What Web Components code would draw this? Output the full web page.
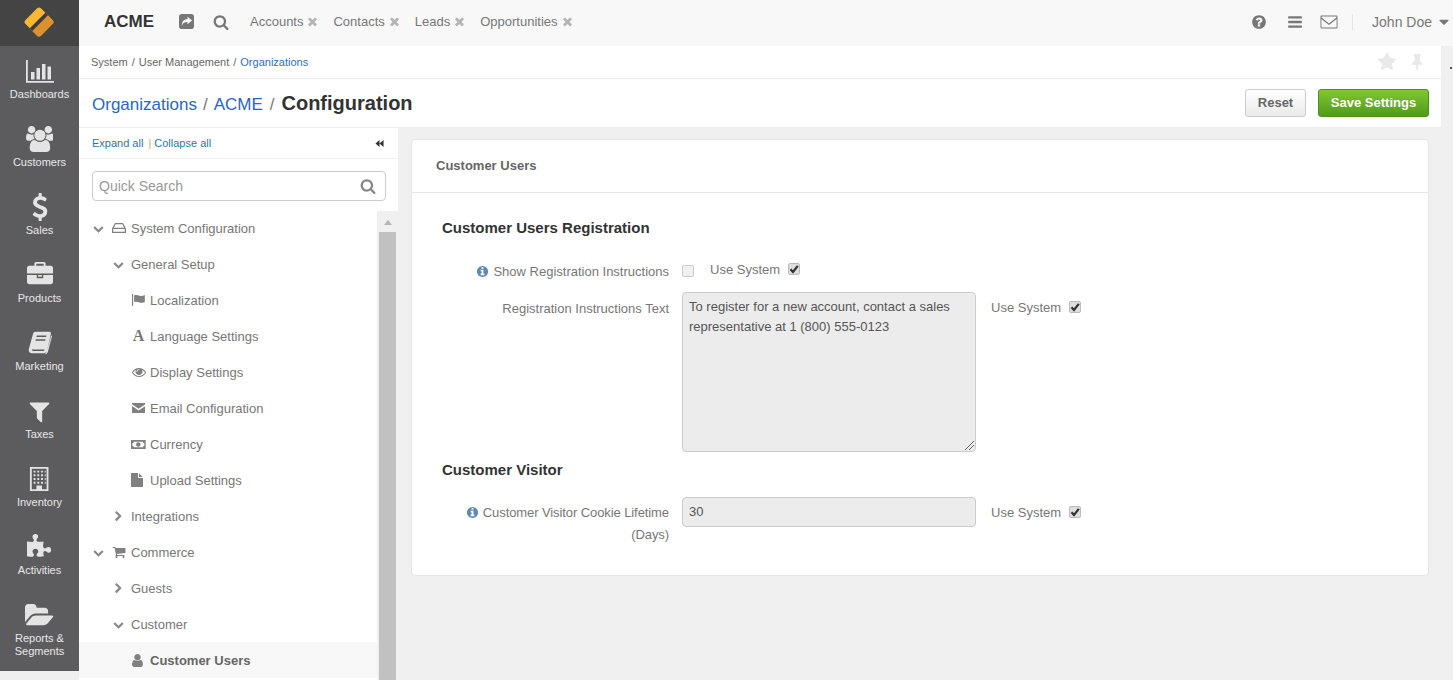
<!DOCTYPE html>
<html>
<head>
<meta charset="utf-8">
<title>Configuration</title>
<style>
html, body { margin: 0; height: 100%; overflow: hidden; background: #f0f0f0; }
body { font-family: "Liberation Sans", Arial, sans-serif; font-size: 13px; color: #777; }
</style>
</head>
<body>

<template id="app-shell-tpl">
    <style>
        :host { display: grid; grid-template-columns: 79px 1fr; width: 1453px; height: 680px; overflow: hidden; }
        .side { display: flex; flex-direction: column; height: 671px; background: #5c5c5e; }
        .main { display: flex; flex-direction: column; min-width: 0; height: 680px; }
    </style>
    <div class="side"><slot name="rail"></slot></div>
    <div class="main"><slot></slot></div>
</template>

<template id="nav-logo-tpl">
    <style>
        :host { display: flex; align-items: center; justify-content: center; height: 46px; background: #444; flex: none; box-sizing: border-box; padding: 0 2px 2px 0; }
        svg { display: block; width: 32px; height: 32px; }
    </style>
    <svg viewBox="0 0 32 32">
        <g transform="rotate(45 16 16)">
            <rect x="5" y="5" width="22" height="22" rx="3" fill="#fdb833"/>
            <path d="M16 5h8q3 0 3 3v16q0 3-3 3h-8z" fill="#dd9030"/>
            <rect x="14" y="5" width="3.6" height="22" fill="#3c3c3c"/>
        </g>
    </svg>
</template>

<template id="nav-item-tpl">
    <style>
        :host { display: flex; flex-direction: column; align-items: center; height: 68px; flex: none; box-sizing: border-box; padding-top: 11px; color: #e8e8e8; font-size: 11px; line-height: 13px; text-align: center; }
        .ico { height: 28px; display: flex; align-items: center; justify-content: center; margin-bottom: 3px; }
    </style>
    <div class="ico"><slot name="icon"></slot></div>
    <div><slot></slot></div>
</template>

<template id="top-bar-tpl">
    <style>
        :host { display: flex; align-items: center; height: 46px; flex: none; box-sizing: border-box; background: #f8f8f8; padding: 0 0 3px 25px; }
        .brand { font-size: 17px; font-weight: bold; color: #333; width: 75px; }
        .tools { display: flex; align-items: center; gap: 19px; margin-right: 21px; }
        .tabs { display: flex; align-items: center; gap: 14px; }
        .right { margin-left: auto; display: flex; align-items: center; padding-right: 1px; }
        .sep { width: 1px; height: 16px; background: #e4e4e4; margin: 0 19px 0 14px; }
        .user { font-size: 14px; color: #777; margin-right: 4px; }
    </style>
    <div class="brand"><slot name="brand"></slot></div>
    <div class="tools"><slot name="tools"></slot></div>
    <div class="tabs"><slot name="tabs"></slot></div>
    <div class="right">
        <slot name="actions"></slot>
        <div class="sep"></div>
        <div class="user"><slot name="user"></slot></div>
        <slot name="caret"></slot>
    </div>
</template>

<template id="pin-tab-tpl">
    <style>
        :host { display: inline-flex; align-items: center; gap: 3px; color: #777; font-size: 13px; }
    </style>
    <slot></slot><fa-icon name="times" size="13" color="#b5b5b5"></fa-icon>
</template>

<template id="page-head-tpl">
    <style>
        :host { display: block; background: #fff; flex: none; }
        .crumbs { display: flex; align-items: center; justify-content: space-between; height: 33px; box-sizing: border-box; padding: 0 17px 0 12px; border-bottom: 1px solid #ededed; font-size: 11px; color: #666; }
        .crumbs .marks { display: flex; align-items: center; gap: 13px; }
        .title { display: flex; align-items: center; justify-content: space-between; height: 49px; padding: 0 12px 0 13px; border-bottom: 1px solid #ededed; box-sizing: border-box; }
        .btns { display: flex; gap: 12px; }
    </style>
    <div class="crumbs"><div><slot name="crumbs"></slot></div><div class="marks"><slot name="marks"></slot></div></div>
    <div class="title"><div><slot name="title"></slot></div><div class="btns"><slot name="buttons"></slot></div></div>
</template>

<template id="act-button-tpl">
    <style>
        :host { display: inline-flex; align-items: center; justify-content: center; box-sizing: border-box; height: 28px; width: 61px; padding-bottom: 1px; border-radius: 3px; font-size: 13px; font-weight: bold; border: 1px solid #ccc; color: #666; background: linear-gradient(#fff, #eaeaea); }
        :host([primary]) { width: 111px; color: #fff; border-color: #4d8f1c; background: linear-gradient(#83c62f, #4f9b1c); }
    </style>
    <slot></slot>
</template>

<template id="tree-panel-tpl">
    <style>
        :host { display: flex; flex-direction: column; width: 319px; flex: none; background: #fff; height: 552px; overflow: hidden; }
        .links { display: flex; align-items: center; justify-content: space-between; height: 31px; box-sizing: border-box; padding: 0 14px 0 13px; border-bottom: 1px solid #efefef; font-size: 11px; color: #1f7aa8; flex: none; }
        .bar { color: #e0a860; margin: 0 3px 0 2px; }
        .search { display: flex; align-items: center; justify-content: space-between; box-sizing: border-box; width: 294px; height: 30px; margin: 12px 0 9px 13px; padding: 0 9px 0 6px; border: 1px solid #ccc; border-radius: 4px; font-size: 14px; color: #999; flex: none; }
        .body { display: grid; grid-template-columns: 298px 2px 17px 2px; flex: 1; min-height: 0; }
        .rows { min-width: 0; overflow: hidden; }
        .gap { background: #f0f0f0; margin-top: 1px; }
        .track { display: flex; flex-direction: column; background: #c1c1c1; margin-top: 1px; }
        .up { height: 21px; flex: none; background: #f0f0f0; display: flex; justify-content: center; padding-top: 9px; box-sizing: border-box; }
        .up i { width: 0; height: 0; border: 4.5px solid transparent; border-top: 0; border-bottom: 5px solid #b5b5b5; }
    </style>
    <div class="links"><div>Expand all <span class="bar">|</span>Collapse all</div><fa-icon name="backward" size="9" color="#333"></fa-icon></div>
    <div class="search"><span>Quick Search</span><fa-icon name="search" size="16" color="#888"></fa-icon></div>
    <div class="body">
        <div class="rows"><slot></slot></div>
        <div class="gap"></div>
        <div class="track"><div class="up"><i></i></div></div>
        <div class="gap"></div>
    </div>
</template>

<template id="tree-row-tpl">
    <style>
        :host { display: flex; align-items: center; height: 36px; color: #777; font-size: 13px; box-sizing: border-box; padding-left: calc(13px + var(--lvl, 0) * 20px); }
        :host([current]) { background: #f8f8f8; font-weight: bold; color: #666; }
        .arrow { width: 12px; height: 12px; display: flex; align-items: center; justify-content: center; margin-right: 7px; flex: none; }
        .ico { width: 15px; display: flex; justify-content: center; margin-right: 5px; flex: none; }
        :host(:not([icon])) .ico { display: none; }
        :host([leaf]) .arrow { display: none; }
        :host([leaf]) .ico { margin-right: 4px; }
    </style>
    <span class="arrow"><slot name="arrow"></slot></span>
    <span class="ico"><slot name="icon"></slot></span>
    <slot></slot>
</template>

<template id="config-card-tpl">
    <style>
        :host { display: block; background: #fff; border: 1px solid #e6e6e6; border-radius: 4px; width: 1018px; box-sizing: border-box; height: 437px; }
        .head { height: 53px; box-sizing: border-box; display: flex; align-items: center; padding: 0 0 2px 24px; border-bottom: 1px solid #e6e6e6; font-size: 13px; font-weight: bold; color: #666; }
        .body { padding: 25px 30px 0; }
    </style>
    <div class="head"><slot name="title"></slot></div>
    <div class="body"><slot></slot></div>
</template>

<template id="form-group-tpl">
    <style>
        :host { display: block; }
        h3 { margin: 0; font-size: 15px; line-height: 20px; font-weight: bold; color: #333; }
    </style>
    <h3><slot name="heading"></slot></h3>
    <slot></slot>
</template>

<template id="form-row-tpl">
    <style>
        :host { display: grid; grid-template-columns: 227px 1fr; column-gap: 13px; font-size: 13px; line-height: 22px; color: #777; }
        .label { text-align: right; }
        .ctl { display: flex; align-items: flex-start; min-width: 0; }
    </style>
    <div class="label"><slot name="label"></slot></div>
    <div class="ctl"><slot></slot></div>
</template>

<template id="use-system-tpl">
    <style>
        :host { display: inline-flex; align-items: center; gap: 8px; color: #777; font-size: 13px; line-height: 22px; height: 22px; }
        check-box { margin-bottom: 2px; }
    </style>
    <slot></slot><check-box checked></check-box>
</template>

<template id="check-box-tpl">
    <style>
        :host { display: inline-flex; align-items: center; justify-content: center; box-sizing: border-box; width: 12px; height: 12px; border: 1px solid #ccc; border-radius: 2px; background: #f0f0f0; }
        :host([checked]) { background: #dedede; border-color: #bbb; }
        svg { display: none; width: 10px; height: 10px; }
        :host([checked]) svg { display: block; }
    </style>
    <svg viewBox="0 0 10 10"><path d="M1.5 5.2 4 8 8.800 1.800" fill="none" stroke="#333" stroke-width="2.200"/></svg>
</template>

<template id="field-box-tpl">
    <style>
        :host { display: block; width: 294px; box-sizing: border-box; flex: none; background: #ececec; border: 1px solid #ccc; border-radius: 4px; padding: 4px 6px; font-size: 13px; line-height: 20px; color: #555; position: relative; }
        svg { position: absolute; right: 1px; bottom: 1px; width: 10px; height: 10px; }
    </style>
    <slot></slot>
    <svg viewBox="0 0 10 10"><path d="M1 10 10 1M5 10l5-5" stroke="#666" stroke-width="1" fill="none"/></svg>
</template>

<app-shell>
    <nav-logo slot="rail"></nav-logo>
    <nav-item slot="rail"><fa-icon slot="icon" name="chart" size="28" color="#e4e4e4"></fa-icon>Dashboards</nav-item>
    <nav-item slot="rail"><fa-icon slot="icon" name="users" size="26" color="#e4e4e4"></fa-icon>Customers</nav-item>
    <nav-item slot="rail"><fa-icon slot="icon" name="dollar" size="28" color="#e4e4e4"></fa-icon>Sales</nav-item>
    <nav-item slot="rail"><fa-icon slot="icon" name="briefcase" size="26" color="#e4e4e4"></fa-icon>Products</nav-item>
    <nav-item slot="rail"><fa-icon slot="icon" name="book" size="26" color="#e4e4e4"></fa-icon>Marketing</nav-item>
    <nav-item slot="rail"><fa-icon slot="icon" name="filter" size="25" color="#e4e4e4"></fa-icon>Taxes</nav-item>
    <nav-item slot="rail"><fa-icon slot="icon" name="building" size="26" color="#e4e4e4"></fa-icon>Inventory</nav-item>
    <nav-item slot="rail"><fa-icon slot="icon" name="puzzle" size="26" color="#e4e4e4"></fa-icon>Activities</nav-item>
    <nav-item slot="rail"><fa-icon slot="icon" name="folder" size="27" color="#e4e4e4"></fa-icon>Reports &amp;<br>Segments</nav-item>

    <top-bar>
        <span slot="brand">ACME</span>
        <fa-icon slot="tools" name="share" size="15" color="#777"></fa-icon>
        <fa-icon slot="tools" name="search" size="16" color="#777"></fa-icon>
        <pin-tab slot="tabs">Accounts</pin-tab>
        <pin-tab slot="tabs">Contacts</pin-tab>
        <pin-tab slot="tabs">Leads</pin-tab>
        <pin-tab slot="tabs">Opportunities</pin-tab>
        <fa-icon slot="actions" name="question" size="16" color="#777"></fa-icon>
        <fa-icon slot="actions" name="bars" size="16" color="#777" style="margin-left:20px"></fa-icon>
        <fa-icon slot="actions" name="envelope" size="16" color="#777" style="margin-left:17px"></fa-icon>
        <span slot="user">John Doe</span>
        <fa-icon slot="caret" name="caret" size="16" color="#777"></fa-icon>
    </top-bar>

    <page-row>
        <page-column>
            <page-head>
                <bread-crumbs slot="crumbs"></bread-crumbs>
                <fa-icon slot="marks" name="star" size="20" color="#e9e9e9"></fa-icon>
                <fa-icon slot="marks" name="pin" size="18" color="#e9e9e9"></fa-icon>
                <page-title slot="title"></page-title>
                <act-button slot="buttons">Reset</act-button>
                <act-button slot="buttons" primary>Save Settings</act-button>
            </page-head>
            <work-area>
                <tree-panel></tree-panel>
            </work-area>
        </page-column>
        <edge-strip></edge-strip>
    </page-row>
</app-shell>

<script>
// icon shapes, mostly 1792 unit squares
const ICONS = {
    search: ["0 0 1792 1792", "M1216 832q0-185-131.5-316.5t-316.5-131.5-316.5 131.5-131.5 316.5 131.5 316.5 316.5 131.5 316.5-131.5 131.5-316.5zm512 832q0 52-38 90t-90 38q-54 0-90-38l-343-342q-179 124-399 124-143 0-273.5-55.5t-225-150-150-225-55.5-273.5 55.5-273.5 150-225 225-150 273.5-55.5 273.5 55.5 225 150 150 225 55.5 273.5q0 220-124 399l343 343q37 37 37 90z"],
    caret: ["0 0 1792 1792", "M1408 704q0 26-19 45l-448 448q-19 19-45 19t-45-19l-448-448q-19-19-19-45t19-45 45-19h896q26 0 45 19t19 45z"],
    bars: ["0 0 1792 1792", "M1664 1344v128q0 26-19 45t-45 19h-1408q-26 0-45-19t-19-45v-128q0-26 19-45t45-19h1408q26 0 45 19t19 45zm0-512v128q0 26-19 45t-45 19h-1408q-26 0-45-19t-19-45v-128q0-26 19-45t45-19h1408q26 0 45 19t19 45zm0-512v128q0 26-19 45t-45 19h-1408q-26 0-45-19t-19-45v-128q0-26 19-45t45-19h1408q26 0 45 19t19 45z"],
    times: ["0 0 1792 1792", "M1490 1322q0 40-28 68l-136 136q-28 28-68 28t-68-28l-294-294-294 294q-28 28-68 28t-68-28l-136-136q-28-28-28-68t28-68l294-294-294-294q-28-28-28-68t28-68l136-136q28-28 68-28t68 28l294 294 294-294q28-28 68-28t68 28l136 136q28 28 28 68t-28 68l-294 294 294 294q28 28 28 68z"],
    star: ["0 0 1792 1792", "M1728 647q0 22-26 48l-363 354 86 500q1 7 1 20 0 21-10.5 35.5t-30.5 14.5q-19 0-40-12l-449-236-449 236q-22 12-40 12-21 0-31.5-14.5t-10.5-35.5q0-6 2-20l86-500-364-354q-25-27-25-48 0-37 56-46l502-73 225-455q19-41 49-41t49 41l225 455 502 73q56 9 56 46z"],
    down: ["0 0 1792 1792", "M1683 808l-742 741q-19 19-45 19t-45-19l-742-741q-19-19-19-45.5t19-45.5l166-165q19-19 45-19t45 19l531 531 531-531q19-19 45-19t45 19l166 165q19 19 19 45.5t-19 45.5z"],
    right: ["0 0 1792 1792", "M1363 877l-742 742q-19 19-45 19t-45-19l-166-166q-19-19-19-45t19-45l531-531-531-531q-19-19-19-45t19-45l166-166q19-19 45-19t45 19l742 742q19 19 19 45t-19 45z"],
    question: ["0 0 1792 1792", "M1024 1376v-192q0-14-9-23t-23-9h-192q-14 0-23 9t-9 23v192q0 14 9 23t23 9h192q14 0 23-9t9-23zm256-672q0-88-55.5-163t-138.5-116-170-41q-243 0-371 213-15 24 8 42l132 100q7 6 19 6 16 0 25-12 53-68 86-92 34-24 86-24 48 0 85.5 26t37.5 59q0 38-20 61t-68 45q-63 28-115.5 86.5t-52.5 125.5v36q0 14 9 23t23 9h192q14 0 23-9t9-23q0-19 21.5-49.5t54.5-49.5q32-18 49-28.5t46-35 44.5-48 28-60.5 12.5-81zm384 192q0 209-103 385.5t-279.5 279.5-385.5 103-385.5-103-279.5-279.5-103-385.5 103-385.5 279.5-279.5 385.5-103 385.5 103 279.5 279.5 103 385.5z"],
    info: ["0 0 1792 1792", "M1152 1376v-160q0-14-9-23t-23-9h-96v-512q0-14-9-23t-23-9h-320q-14 0-23 9t-9 23v160q0 14 9 23t23 9h96v320h-96q-14 0-23 9t-9 23v160q0 14 9 23t23 9h448q14 0 23-9t9-23zm-128-896v-160q0-14-9-23t-23-9h-192q-14 0-23 9t-9 23v160q0 14 9 23t23 9h192q14 0 23-9t9-23zm640 416q0 209-103 385.5t-279.5 279.5-385.5 103-385.5-103-279.5-279.5-103-385.5 103-385.5 279.5-279.5 385.5-103 385.5 103 279.5 279.5 103 385.5z"],
    filter: ["0 0 1792 1792", "M1595 295q17 41-14 70l-493 493v742q0 42-39 59-13 5-25 5-27 0-45-19l-256-256q-19-19-19-45v-486l-493-493q-31-29-14-70 17-39 59-39h1280q42 0 59 39z"],
    user: ["0 0 1792 1792", "M1536 1399q0 109-62.5 187t-150.5 78h-854q-88 0-150.5-78t-62.5-187q0-85 8.5-160.5t31.5-152 58.5-131 94-89 134.5-34.5q131 128 313 128t313-128q76 0 134.5 34.5t94 89 58.5 131 31.5 152 8.5 160.5zm-256-887q0 159-112.5 271.5t-271.5 112.5-271.5-112.5-112.5-271.5 112.5-271.5 271.5-112.5 271.5 112.5 112.5 271.5z"],
    cart: ["0 0 1792 1792", "M704 1536q0 52-38 90t-90 38-90-38-38-90 38-90 90-38 90 38 38 90zm896 0q0 52-38 90t-90 38-90-38-38-90 38-90 90-38 90 38 38 90zm128-1088v512q0 24-16.5 42.5t-40.5 21.5l-1044 122q13 60 13 70 0 16-24 64h920q26 0 45 19t19 45-19 45-45 19h-1024q-26 0-45-19t-19-45q0-11 8-31.5t16-36 21.5-40 15.5-29.5l-177-823h-204q-26 0-45-19t-19-45 19-45 45-19h256q16 0 28.5 6.5t19.5 15.5 13 24.5 8 26 5.5 29.5 4.5 26h1201q26 0 45 19t19 45z"],
    dollar: ["0 0 1792 1792", "M1362 1185q0 153-99.5 263.5t-258.5 136.5v175q0 14-9 23t-23 9h-135q-13 0-22.5-9.5t-9.5-22.5v-175q-66-9-127.5-31t-101.5-44.5-74-48-46.5-37.5-17.5-18q-17-21-2-41l103-135q7-10 23-12 15-2 24 9l2 2q113 99 243 125 37 8 74 8 81 0 142.5-43t61.5-122q0-28-15-53t-33.5-42-58.5-37.5-66-32-80-32.5q-39-16-61.5-25t-61.5-26.5-62.5-31-56.5-35.5-53.5-42.5-43.5-49-35.5-58-21-66.5-8.5-78q0-138 98-242t255-134v-180q0-13 9.5-22.5t22.5-9.5h135q14 0 23 9t9 23v176q57 6 110.5 23t87 33.5 63.5 37.5 39 29 15 14q17 18 5 38l-81 146q-8 15-23 16-14 3-27-7-3-3-14.5-12t-39-26.5-58.5-32-74.5-26-85.5-11.5q-95 0-155 43t-60 111q0 26 8.5 48t29.5 41.5 39.5 33 56 31 60.5 27 70 27.5q53 20 81 31.5t76 35 75.5 42.5 62 50 53 63.5 31.5 76.5 13 94z"],
    briefcase: ["0 0 1792 1792", "M640 256h512v-128h-512v128zm1152 640v480q0 66-47 113t-113 47h-1472q-66 0-113-47t-47-113v-480h672v160q0 26 19 45t45 19h320q26 0 45-19t19-45v-160h672zm-768 0v128h-256v-128h256zm768-480v384h-1792v-384q0-66 47-113t113-47h352v-160q0-40 28-68t68-28h576q40 0 68 28t28 68v160h352q66 0 113 47t47 113z"],
    users: ["0 0 1920 1792", "M593 896q-162 5-265 128h-134q-82 0-138-40.5t-56-118.5q0-353 124-353 6 0 43.5 21t97.5 42.5 119 21.5q67 0 133-23-5 37-5 66 0 139 81 256zm1071 637q0 120-73 189.5t-194 69.5h-874q-121 0-194-69.5t-73-189.5q0-53 3.5-103.5t14-109 26.5-108.5 43-97.5 62-81 85.5-53.5 111.5-20q10 0 43 21.5t73 48 107 48 135 21.5 135-21.5 107-48 73-48 43-21.5q61 0 111.5 20t85.5 53.5 62 81 43 97.5 26.5 108.5 14 109 3.5 103.5zm-1024-1277q0 106-75 181t-181 75-181-75-75-181 75-181 181-75 181 75 75 181zm704 384q0 159-112.5 271.5t-271.5 112.5-271.5-112.5-112.5-271.5 112.5-271.5 271.5-112.5 271.5 112.5 112.5 271.5zm576 225q0 78-56 118.5t-138 40.5h-134q-103-123-265-128 81-117 81-256 0-29-5-66 66 23 133 23 59 0 119-21.5t97.5-42.5 43.5-21q124 0 124 353zm-128-609q0 106-75 181t-181 75-181-75-75-181 75-181 181-75 181 75 75 181z"],
    folder: ["0 0 1920 1792", "M1879 952q0 31-31 66l-336 396q-43 51-120.5 86.5t-143.5 35.5h-1088q-34 0-60.5-13t-26.5-43q0-31 31-66l336-396q43-51 120.5-86.5t143.5-35.5h1088q34 0 60.5 13t26.5 43zm-343-344v160h-832q-94 0-197 47.5t-164 119.5l-337 396-5 6q0-4-.5-12.5t-.5-12.5v-960q0-92 66-158t158-66h320q92 0 158 66t66 158v32h544q92 0 158 66t66 158z"],
    puzzle: ["0 0 1792 1792", "M1664 1098q0 81-44.5 135t-123.5 54q-41 0-77.5-17.5t-59-38-56.5-38-71-17.5q-110 0-110 124 0 39 16 115t15 115v5q-22 0-33 1-34 3-97.5 11.5t-115.5 13.5-98 5q-61 0-103-26.5t-42-83.5q0-37 17.5-71t38-56.5 38-59 17.5-77.5q0-79-54-123.5t-135-44.5q-84 0-143 45.5t-59 127.5q0 43 15 83t33.5 64.5 33.5 53 15 50.5q0 45-46 89-37 35-117 35-95 0-245-24-9-2-27.5-4t-27.5-4l-13-2q-2-1-6-1-5 0-5-2v-1024q2 1 17.5 3.5t34 5 21.5 3.5q150 24 245 24 80 0 117-35 46-44 46-89 0-22-15-50.5t-33.5-53-33.5-64.5-15-83q0-82 59-127.5t144-45.5q80 0 134 44.5t54 123.5q0 41-17.5 77.5t-38 59-38 56.5-17.5 71q0 57 42 83.5t103 26.5q64 0 180-15t163-17v2q-1 2-3.5 17.5t-5 34-3.5 21.5q-24 150-24 245 0 80 35 117 44 46 89 46 22 0 50.5-15t53-33.5 64.5-33.5 83-15q82 0 127.5 59t45.5 143z"],
    eye: ["0 0 1792 1792", "M1664 960q-152-236-381-353 61 104 61 225 0 185-131.5 316.5t-316.5 131.5-316.5-131.5-131.5-316.5q0-121 61-225-229 117-381 353 133 205 333.5 326.5t434.5 121.5 434.5-121.5 333.5-326.5zm-720-384q0-20-14-34t-34-14q-125 0-214.5 89.5t-89.5 214.5q0 20 14 34t34 14 34-14 14-34q0-86 61-147t147-61q20 0 34-14t14-34zm848 384q0 34-20 69-140 230-376.5 368.5t-499.5 138.5-499.5-139-376.5-368q-20-35-20-69t20-69q140-229 376.5-368t499.5-139 499.5 139 376.5 368q20 35 20 69z"],
    file: ["0 0 1536 1792", "M1024 512v-472q22 14 36 28l408 408q14 14 28 36h-472zm-128 32q0 40 28 68t68 28h544v1056q0 40-28 68t-68 28h-1344q-40 0-68-28t-28-68v-1600q0-40 28-68t68-28h800v544z"],
    chart: ["0 0 28 28", "M0 3h1.800v21H28v1.800H0zM5 15h3.500v7.500H5zM10.500 11H14v11.500h-3.500zM16 7h3.500v15.500H16zM21.500 9.500H25v13h-3.500z"],
    book: ["0 0 28 28", "M9 2h15c1.500 0 2 1 1.700 2.200L21.500 22c-.5 1.800-1.600 3-3.500 3H5c-2.500 0-3.500-2-3-4.500L6.500 4C7 2.800 7.800 2 9 2zm1.500 4-.4 1.600h10.500l.4-1.600zm-1 4-.4 1.600h10.500l.4-1.600zM5.500 20.500c-.3 1.200.1 2 1.300 2h10.700c.7 0 1.100-.3 1.300-.9l.2-.6H7c-.7 0-1.200 0-1.500-.5zM26 6l1 .5-4.500 17c-.4 1.500-1.500 2.500-3 2.500l-1-.1c1.300-.3 2.300-1.100 2.700-2.700z"],
    building: ["0 0 22 28", "M1 1h20v26H1zM3 3v22h5v-4h6v4h5V3zM5 5h2v2H5zm4 0h2v2H9zm4 0h2v2h-2zm4 0h1v2h-1zM5 9h2v2H5zm4 0h2v2H9zm4 0h2v2h-2zm4 0h1v2h-1zM5 13h2v2H5zm4 0h2v2H9zm4 0h2v2h-2zm4 0h1v2h-1zM5 17h2v2H5zm4 0h2v2H9zm4 0h2v2h-2zm4 0h1v2h-1z"],
    share: ["0 0 16 16", "M3 0h10q3 0 3 3v10q0 3-3 3H3q-3 0-3-3V3q0-3 3-3zm6 3v2.500C5.500 5.500 3 7.500 3 12.500c1-3 3-4 6-4V11l5-4z"],
    envelope: ["0 0 18 16", "M1.500 1.500h15q1 0 1 1v11q0 1-1 1h-15q-1 0-1-1v-11q0-1 1-1zm0 1 .1 1L9 9.500l7.400-6 .1-1zm-.1 2.600v8.400h15.200V5.100L9 11z"],
    pin: ["0 0 16 20", "M4 1h8v1.500l-1 .8V9c2 1 3 2.500 3 4H9v6l-1 1-1-1v-6H2c0-1.500 1-3 3-4V3.300l-1-.8z"],
    backward: ["0 0 10 10", "M5 1v8L.5 5zM9.500 1v8L5 5z"],
    flag: ["0 0 16 14", "M0 0h1.300v14H0zM2.500 1.500C5 .5 7 1.500 9 2s3.500.2 6-.8v8c-2.500 1-4 1.300-6 .8s-4-1.500-6.500-.5z"],
    mailbox: ["0 0 16 12", "M.5 0h15c.3 0 .5.2.5.5v1L8 7 0 1.500v-1C0 .2.200 0 .5 0zM0 3.500 8 9l8-5.500v8c0 .3-.2.5-.5.500H.5c-.3 0-.5-.2-.5-.5z"],
    money: ["0 0 16 12", "M0 1h16v10H0zm3 2a1.500 1.500 0 0 1-1.500 1.500v3A1.500 1.500 0 0 1 3 9h10a1.500 1.500 0 0 1 1.500-1.500v-3A1.500 1.500 0 0 1 13 3zm5 .5a2.500 2.500 0 1 1 0 5 2.500 2.500 0 0 1 0-5z"],
    hdd: ["0 0 14 12", "M3 1h8l3 5.500V11H0V6.500zm.7 1.200L1.800 5.800h10.400l-1.900-3.600zM1.200 7v2.800h11.600V7z"]
};

function plainElement(name, tpl) {
    customElements.define(name, class extends HTMLElement {
        constructor() {
            super();
            const root = this.attachShadow({ mode: "open" });
            root.appendChild(document.getElementById(tpl).content.cloneNode(true));
        }
    });
}

class FaIcon extends HTMLElement {
    connectedCallback() {
        const shape = ICONS[this.getAttribute("name")];
        const size = this.getAttribute("size") || 14;
        const color = this.getAttribute("color") || "currentColor";
        const box = shape[0].split(" ");
        const w = Math.round(size * box[2] / box[3] * 10) / 10;
        this.attachShadow({ mode: "open" }).innerHTML = `<style>:host { display: inline-flex; flex: none; } svg { display: block; }</style>
            <svg width="${w}" height="${size}" viewBox="${shape[0]}"><path fill="${color}" fill-rule="evenodd" d="${shape[1]}"/></svg>`;
    }
}
customElements.define("fa-icon", FaIcon);

["app-shell", "nav-logo", "nav-item", "top-bar", "pin-tab", "page-head", "act-button", "tree-panel", "tree-row",
    "config-card", "form-group", "form-row", "use-system", "check-box", "field-box"].forEach(n => plainElement(n, n + "-tpl"));

class BreadCrumbs extends HTMLElement {
    connectedCallback() {
        this.attachShadow({ mode: "open" }).innerHTML = `<style>:host { display: inline; } a { color: #2f6fb5; text-decoration: none; } i { font-style: normal; margin: 0 4px; }</style>
            System<i>/</i>User Management<i>/</i><a>Organizations</a>`;
    }
}
customElements.define("bread-crumbs", BreadCrumbs);

class PageTitle extends HTMLElement {
    connectedCallback() {
        this.attachShadow({ mode: "open" }).innerHTML = `<style>
                :host { display: flex; align-items: baseline; font-size: 17px; color: #777; }
                a { color: #2a66c0; text-decoration: none; }
                i { font-style: normal; margin: 0 6px; }
                i + a + i { margin: 0 7px; }
                b { font-size: 20px; color: #333; }
            </style>
            <a>Organizations</a><i>/</i><a>ACME</a><i>/</i><b>Configuration</b>`;
    }
}
customElements.define("page-title", PageTitle);

class PageRow extends HTMLElement {
    constructor() {
        super();
        this.attachShadow({ mode: "open" }).innerHTML = `<style>:host { display: flex; flex: 1; min-height: 0; }</style><slot></slot>`;
    }
}
customElements.define("page-row", PageRow);

class PageColumn extends HTMLElement {
    constructor() {
        super();
        this.attachShadow({ mode: "open" }).innerHTML = `<style>:host { display: flex; flex-direction: column; width: 1362px; flex: none; min-height: 0; }</style><slot></slot>`;
    }
}
customElements.define("page-column", PageColumn);

class EdgeStrip extends HTMLElement {
    constructor() {
        super();
        this.attachShadow({ mode: "open" }).innerHTML = `<style>
            :host { display: block; flex: 1; background: #f0f0f0; padding: 21px 0 0 9px; box-sizing: border-box; }
            i { display: block; width: 2px; height: 2px; background: #555; }
        </style><i></i>`;
    }
}
customElements.define("edge-strip", EdgeStrip);

class WorkArea extends HTMLElement {
    constructor() {
        super();
        this.attachShadow({ mode: "open" }).innerHTML = `<style>
            :host { display: flex; flex: 1; min-height: 0; }
            .pad { padding: 11px 0 0 13px; }
        </style><slot name="tree"></slot><div class="pad"><slot name="card"></slot></div>`;
    }
    connectedCallback() {
        // filled from data so the tree rows stay in one list
        const tree = [
            [0, "down", "hdd", "System Configuration"],
            [1, "down", "", "General Setup"],
            [2, "", "flag", "Localization"],
            [2, "", "A", "Language Settings"],
            [2, "", "eye", "Display Settings"],
            [2, "", "mailbox", "Email Configuration"],
            [2, "", "money", "Currency"],
            [2, "", "file", "Upload Settings"],
            [1, "right", "", "Integrations"],
            [0, "down", "cart", "Commerce"],
            [1, "right", "", "Guests"],
            [1, "down", "", "Customer"],
            [2, "", "user", "Customer Users"]
        ];
        const panel = this.querySelector("tree-panel");
        panel.slot = "tree";
        tree.forEach(([lvl, arrow, icon, text]) => {
            const row = document.createElement("tree-row");
            row.style.setProperty("--lvl", lvl);
            if (lvl == 2) { row.setAttribute("leaf", ""); row.style.paddingLeft = "52px"; }
            if (text == "Customer Users") row.setAttribute("current", "");
            if (arrow) row.innerHTML += `<fa-icon slot="arrow" name="${arrow}" size="11" color="#888"></fa-icon>`;
            if (icon == "A") {
                row.setAttribute("icon", "");
                row.innerHTML += `<span slot="icon" style="font:bold 16px 'Liberation Serif',serif;color:#777;line-height:16px">A</span>`;
            } else if (icon) {
                row.setAttribute("icon", "");
                const size = { file: 14, eye: 14, user: 15, cart: 14, flag: 12, mailbox: 10, money: 11, hdd: 12 }[icon];
                const nudge = { file: -3, user: -2 }[icon] || 0;
                row.innerHTML += `<fa-icon slot="icon" name="${icon}" size="${size}" color="#808080" style="margin-left:${nudge}px"></fa-icon>`;
            }
            row.appendChild(document.createTextNode(text));
            panel.appendChild(row);
        });

        const card = document.createElement("config-card");
        card.slot = "card";
        card.innerHTML = `
            <span slot="title">Customer Users</span>
            <form-group>
                <span slot="heading">Customer Users Registration</span>
                <form-row style="margin-top:22px">
                    <span slot="label" style="display:block;padding-top:1px"><fa-icon name="info" size="13" color="#5f87b7" style="vertical-align:-2px;margin-right:4px"></fa-icon>Show Registration Instructions</span>
                    <check-box style="margin:5px 16px 0 0"></check-box>
                    <use-system style="margin-top:-1px">Use System</use-system>
                </form-row>
                <form-row style="margin-top:9px">
                    <span slot="label" style="display:block;padding-top:6px">Registration Instructions Text</span>
                    <field-box style="height:160px">To register for a new account, contact a sales representative at 1 (800) 555-0123</field-box>
                    <use-system style="margin:5px 0 0 15px">Use System</use-system>
                </form-row>
            </form-group>
            <form-group style="margin-top:8px">
                <span slot="heading">Customer Visitor</span>
                <form-row style="margin-top:17px">
                    <span slot="label" style="display:block;padding-top:5px;letter-spacing:-.09px"><fa-icon name="info" size="13" color="#5f87b7" style="vertical-align:-2px;margin-right:4px"></fa-icon>Customer Visitor Cookie Lifetime (Days)</span>
                    <field-box class="one" style="height:30px">30</field-box>
                    <use-system style="margin:5px 0 0 15px">Use System</use-system>
                </form-row>
            </form-group>`;
        this.appendChild(card);
        // single line input has no resize grip
        card.querySelector("field-box.one").shadowRoot.querySelector("svg").style.display = "none";
    }
}
customElements.define("work-area", WorkArea);
</script>
</body>
</html>
